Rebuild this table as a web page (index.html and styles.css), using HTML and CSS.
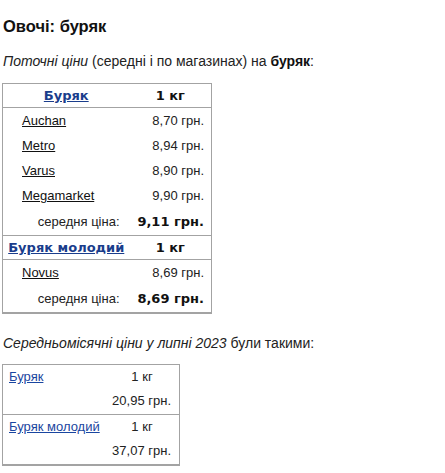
FILE: index.html
```html
<!DOCTYPE html>
<html lang="uk">
<head>
<meta charset="utf-8">
<link rel="stylesheet" href="styles.css">
</head>
<body>
<div class="page">
  <h1 class="title">Овочі: буряк</h1>
  <p class="intro"><i>Поточні ціни</i> (середні і по магазинах) на <b>буряк</b>:</p>
  <table class="prices">
    <colgroup><col class="c1"><col class="c2"></colgroup>
    <tr class="head first">
      <th><a href="#" class="plink">Буряк</a></th>
      <th>1 кг</th>
    </tr>
    <tr class="store"><td><a href="#" class="slink">Auchan</a></td><td class="price">8,70 грн.</td></tr>
    <tr class="store"><td><a href="#" class="slink">Metro</a></td><td class="price">8,94 грн.</td></tr>
    <tr class="store"><td><a href="#" class="slink">Varus</a></td><td class="price">8,90 грн.</td></tr>
    <tr class="store"><td><a href="#" class="slink">Megamarket</a></td><td class="price">9,90 грн.</td></tr>
    <tr class="avg"><td class="avglabel">середня ціна:</td><td class="avgprice">9,11 грн.</td></tr>
    <tr class="head">
      <th><a href="#" class="plink">Буряк молодий</a></th>
      <th>1 кг</th>
    </tr>
    <tr class="store"><td><a href="#" class="slink">Novus</a></td><td class="price">8,69 грн.</td></tr>
    <tr class="avg"><td class="avglabel">середня ціна:</td><td class="avgprice">8,69 грн.</td></tr>
  </table>
  <p class="intro second"><i>Середньомісячні ціни у липні 2023</i> були такими:</p>
  <table class="monthly">
    <tr class="mrow">
      <td class="mname"><a href="#" class="mlink">Буряк</a></td>
      <td class="mval"><div class="unit">1 кг</div><div class="mprice">20,95 грн.</div></td>
    </tr>
    <tr class="mrow sep">
      <td class="mname"><a href="#" class="mlink">Буряк молодий</a></td>
      <td class="mval"><div class="unit">1 кг</div><div class="mprice">37,07 грн.</div></td>
    </tr>
  </table>
</div>
</body>
</html>
```
FILE: styles.css
```css
html, body {
  margin: 0;
  padding: 0;
  background: #fff;
}
.page {
  padding: 0 2px;
  font-family: "Liberation Sans", Arial, sans-serif;
  color: #222;
}
.title {
  font-size: 16.5px;
  line-height: 20px;
  font-weight: bold;
  margin: 16px 0 0 1px;
  color: #111;
}
.intro {
  font-size: 14px;
  line-height: 20px;
  margin: 15px 0 0 1px;
}
.intro b { color: #111; }
.prices {
  margin-top: 12px;
  border-collapse: collapse;
  border: 1px solid #a3a3a3;
  border-bottom: 2px solid #a3a3a3;
  width: 210px;
  font-size: 13px;
}
.prices .c1 { width: 127px; }
.prices td, .prices th {
  padding: 0;
}
.head th {
  height: 23px;
  font-family: "DejaVu Sans", Verdana, sans-serif;
  font-weight: bold;
  font-size: 13px;
  text-align: center;
  color: #111;
  border-top: 1px solid #a3a3a3;
  border-bottom: 1px solid #a3a3a3;
}
.plink { color: #1a3d8c; }
.store td { height: 25px; }
.store td:first-child { padding-left: 19px; }
.slink { color: #111; }
.price { text-align: right; padding-right: 7px !important; }
.avg td { height: 27px; }
.avglabel { text-align: right; padding-right: 10px !important; }
.avgprice {
  text-align: right;
  padding-right: 7px !important;
  font-family: "DejaVu Sans", Verdana, sans-serif;
  font-weight: bold;
  color: #111;
}
.second { margin-top: 19px; }
.monthly {
  margin-top: 11px;
  border-collapse: collapse;
  border: 1px solid #a3a3a3;
  border-bottom: 2px solid #a3a3a3;
  width: 178px;
  font-size: 13px;
}
.monthly td { padding: 0; vertical-align: top; }
.mrow td { padding-bottom: 1px; }
.sep td { border-top: 1px solid #a3a3a3; }
.mname { padding-left: 6px !important; white-space: nowrap; }
.mlink { color: #1a46a0; }
.mval { padding-right: 8px !important; white-space: nowrap; }
.unit { line-height: 24px; text-align: center; padding-left: 6px; }
.mprice { line-height: 24px; text-align: right; }
.mname a { display: inline-block; line-height: 24px; }
```
